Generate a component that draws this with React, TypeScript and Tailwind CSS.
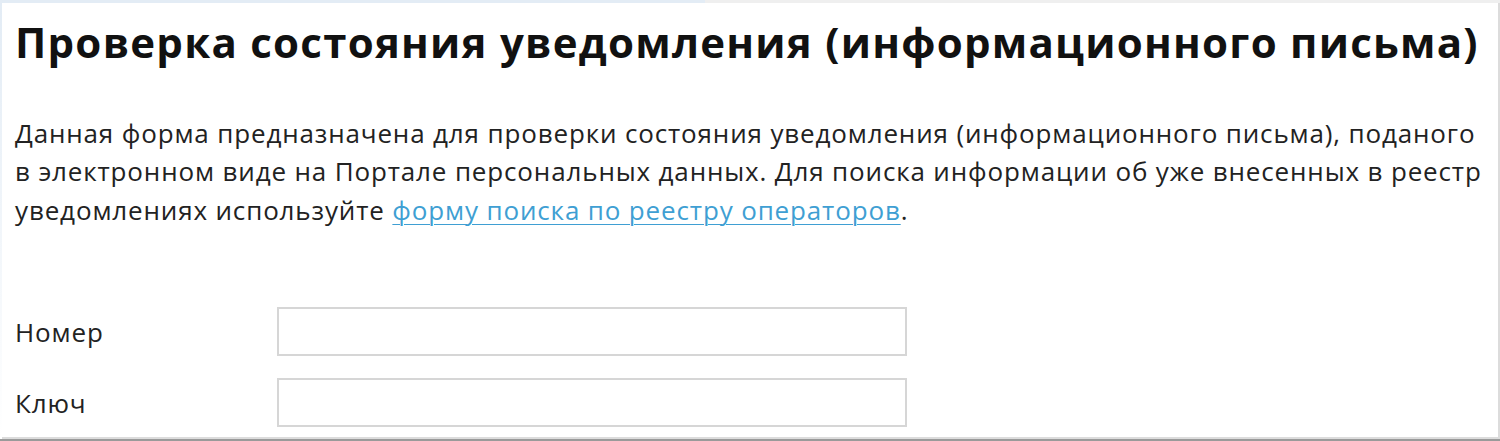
export default function App() {
  return (
    <div className="h-[441px] w-full overflow-hidden bg-white flex flex-col font-['Open_Sans',sans-serif]">
      <div className="flex h-[3px] shrink-0">
        <div className="w-[705px] bg-[#e3ecf5]" />
        <div className="flex-1 bg-[#efefef]" />
      </div>
      <div className="flex-1 flex min-h-0">
        <div className="w-[2px] shrink-0 bg-gradient-to-b from-[#e3ecf5] to-white" />
        <div className="flex-1 border-r-2 border-b-2 border-[#dcdcdc] pl-[13px] pr-2">
          <h1 className="mt-[14px] text-[42px] leading-[50px] font-bold tracking-[1.25px] text-[#111] whitespace-nowrap">
            Проверка состояния уведомления (информационного письма)
          </h1>
          <p className="mt-[47px] text-[26px] leading-[38.4px] tracking-[0.85px] text-[#222]">
            Данная форма предназначена для проверки состояния уведомления (информационного письма), поданого
            в электронном виде на Портале персональных данных. Для поиска информации об уже внесенных в реестр
            уведомлениях используйте{' '}
            <a href="#" className="text-[#3f9fd3] underline underline-offset-[4px] decoration-1">
              форму поиска по реестру операторов
            </a>
            .
          </p>
          <form className="mt-[78px] flex flex-col gap-[22px]">
            <div className="flex items-center">
              <label className="w-[262px] pt-[2px] text-[26px] tracking-[0.85px] text-[#222]">Номер</label>
              <input type="text" className="w-[630px] h-[49px] border-2 border-[#d6d6d6] bg-white outline-none" />
            </div>
            <div className="flex items-center">
              <label className="w-[262px] pt-[2px] text-[26px] tracking-[0.85px] text-[#222]">Ключ</label>
              <input type="text" className="w-[630px] h-[49px] border-2 border-[#d6d6d6] bg-white outline-none" />
            </div>
          </form>
        </div>
      </div>
      <div className="h-[2px] shrink-0 bg-[#9a9a9a]" />
    </div>
  );
}
